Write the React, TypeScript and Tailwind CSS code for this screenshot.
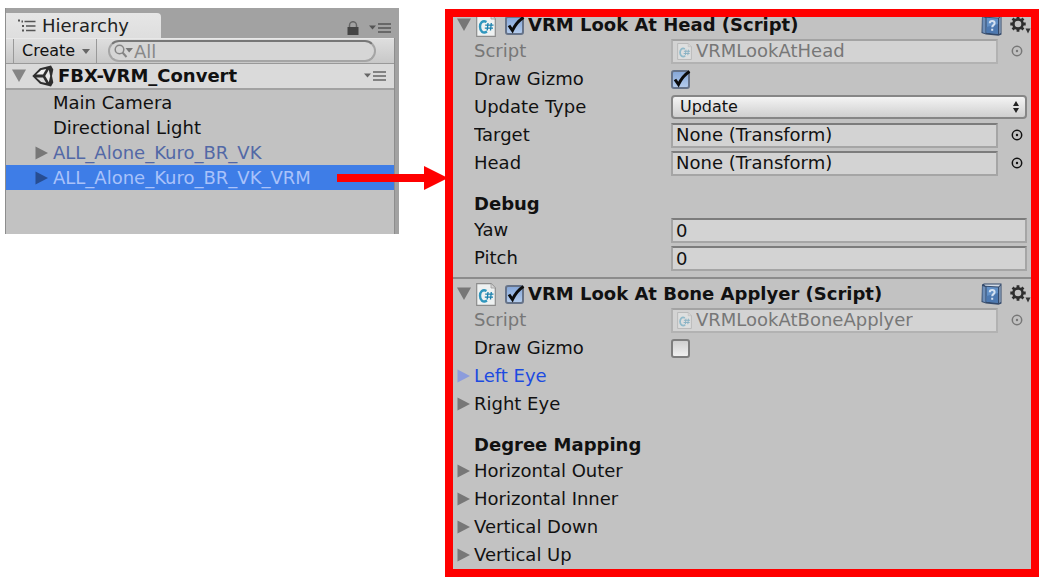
import { useState, ReactNode } from 'react';
import clsx from 'clsx';

const Triangle = ({ open, className }: { open?: boolean, className?: string }) => (
    <svg viewBox="0 0 14 14" className={clsx('w-3.5 h-3.5 shrink-0 fill-current', className)}>
        <path d={open ? 'M0 0.5H14L7 13Z' : 'M0.5 0.5L13 7L0.5 13.5Z'} />
    </svg>
)

const MenuIcon = ({ className }: { className?: string }) => (
    <svg viewBox="0 0 22 10" className={clsx('w-[22px] h-2.5 shrink-0', className)}>
        <path d="M0 2.5H7L3.5 6.5Z" fill="currentColor" />
        <path d="M9 1H22M9 5H22M9 9H22" stroke="currentColor" strokeWidth="1.6" />
    </svg>
)

const HierarchyIcon = () => (
    <svg viewBox="0 0 18 14" className="w-[18px] h-3.5 shrink-0" fill="none" stroke="#555" strokeWidth="1.6">
        <path d="M6.5 2.5H17.5M8 7H17.5M8 11.5H17.5" />
        <path d="M0 1.5H2M3.5 2.5H5M4 7H6M4 11.5H6" strokeWidth="2" />
    </svg>
)

const LockIcon = () => (
    <svg viewBox="0 0 12 14" className="w-3 h-3.5 shrink-0">
        <path d="M2.5 7V4.2a3.5 3.5 0 0 1 7 0V7" fill="none" stroke="#666" strokeWidth="1.5" />
        <rect x="0.5" y="6" width="11" height="8" fill="#444" />
    </svg>
)

const UnityIcon = () => (
    <svg viewBox="0 0 22 22" className="w-[22px] h-[22px] shrink-0">
        <path d="M0.3 11L8 3.2L19 0.4L21.3 4.5L20 11L21.3 17.5L19 21.6L8 18.8Z" fill="#2e2e2e" />
        <path d="M4.2 9.4L9.2 4.9L14.2 4L11 9.4Z" fill="#f0f0f0" />
        <path d="M4.2 12.6L9.2 17.1L14.2 18L11 12.6Z" fill="#dcdcdc" />
        <path d="M13.2 11L16.8 4.8L18.2 11L16.8 17.2Z" fill="#e8e8e8" />
    </svg>
)

const SearchIcon = () => (
    <svg viewBox="0 0 20 14" className="w-5 h-3.5 shrink-0">
        <circle cx="5.5" cy="5.5" r="4.3" fill="none" stroke="#858585" strokeWidth="1.5" />
        <path d="M8.5 8.5L12.5 13" stroke="#858585" strokeWidth="2" />
        <path d="M11.5 4H19L15.2 8.5Z" fill="#777" />
    </svg>
)

const ScriptIcon = ({ className }: { className?: string }) => (
    <svg viewBox="0 0 20 23" className={clsx('shrink-0', className)}>
        <path d="M0.7 0.7H15L19.3 5V22.3H0.7Z" fill="#eef1f1" stroke="#8c8c8c" strokeWidth="1.2" />
        <path d="M15 0.7V5H19.3" fill="#d5d5d5" stroke="#9a9a9a" strokeWidth="0.8" />
        <path d="M10.5 8C6.5 5.8 4 9.2 4 12.8C4 17.2 7 19.8 11 17.6" fill="none" stroke="#2f96bd" strokeWidth="2.4" />
        <path d="M12 9L11.2 16.5M15.3 9L14.5 16.5M9.2 11.2H17.5M8.8 14.2H17" stroke="#1b81ad" strokeWidth="1.3" />
    </svg>
)

const BookIcon = () => (
    <svg viewBox="0 0 21 22" className="w-[21px] h-[22px] shrink-0">
        <path d="M1 1.5L3 0.5H20.5V20.5L17.5 21.8L5 20.5L0.5 19Z" fill="#33496a" />
        <path d="M1.5 3L4.5 4V19.5L1.5 18.2Z" fill="#6f8fb8" />
        <path d="M3 1.5H19.5L17.5 3.5L4.5 2.8Z" fill="#d3dce6" />
        <path d="M5.5 3.8L17 4.5V19.8L5.5 18.8Z" fill="#6290c6" />
        <path d="M5.5 13L17 10V19.8L5.5 18.8Z" fill="#4c78b0" />
        <path d="M18.2 4.2L19.7 2.6V19L18.2 20Z" fill="#8ea2bc" />
        <path d="M8.8 9.2C8.8 6.4 13.6 6.4 13.6 9.2C13.6 11.2 11.2 11 11.2 13.2M11.2 14.8V16.8" fill="none" stroke="#d5e2f2" strokeWidth="2" />
    </svg>
)

const GearIcon = () => (
    <svg viewBox="0 0 21 18" className="w-[21px] h-[18px] shrink-0">
        <circle cx="8" cy="8" r="4.6" fill="none" stroke="#2e2e2e" strokeWidth="2.6" />
        <path d="M8 0.3V3M8 13V15.7M0.3 8H3M13 8H15.7M2.6 2.6L4.5 4.5M11.5 11.5L13.4 13.4M13.4 2.6L11.5 4.5M2.6 13.4L4.5 11.5" stroke="#2e2e2e" strokeWidth="2.8" />
        <path d="M15.5 12.5H20.5L18 17.5Z" fill="#333" />
    </svg>
)

const PickerIcon = () => (
    <svg viewBox="0 0 12 12" className="w-3 h-3">
        <circle cx="6" cy="6" r="4.7" fill="none" stroke="currentColor" strokeWidth="1.5" />
        <circle cx="6" cy="6" r="1.2" fill="currentColor" />
    </svg>
)

const Checkbox = ({ id, label, initial }: { id: string, label?: string, initial: boolean }) => {
    const [checked, setChecked] = useState(initial)

    return (
        <span className="relative w-[19px] h-[19px] shrink-0">
            <input
                id={id}
                type="checkbox"
                aria-label={label}
                checked={checked}
                onChange={() => setChecked(!checked)}
                className="block appearance-none w-[19px] h-[19px] rounded-[3px] border-2 border-[#7d7d7d] bg-linear-to-b from-[#cfcfcf] to-[#f0f0f0] checked:border-[#667389] checked:from-[#86a7d8] checked:to-[#b3cbec]"
            />
            {checked && (
                <svg viewBox="0 0 19 19" className="absolute inset-0 w-[19px] h-[19px] overflow-visible pointer-events-none">
                    <path d="M4 9.5L7.5 14.5C10 9 13 5 18.5 1.5" fill="none" stroke="#0c0c0c" strokeWidth="3" />
                </svg>
            )}
        </span>
    )
}

const fieldStyle = 'flex-1 min-w-0 h-[25px] border-2 border-[#a5a5a5] border-t-[#7c7c7c] bg-[#d3d3d3] px-[3px] text-left leading-5'

const Row = ({ label, htmlFor, dimmed, children }: {
    label: string,
    htmlFor?: string,
    dimmed?: boolean,
    children: ReactNode
}) => (
    <div className={clsx('flex items-center h-7 pl-[21px] pr-1', dimmed && 'text-[#777]')}>
        <label htmlFor={htmlFor} className="w-[197px] shrink-0 truncate">{label}</label>
        {children}
    </div>
)

const ObjectRow = ({ id, label, value, script }: {
    id: string,
    label: string,
    value: string,
    script?: boolean
}) => (
    <Row label={label} htmlFor={id} dimmed={script}>
        <button
            id={id}
            disabled={script}
            className={clsx(fieldStyle, 'flex items-center gap-1', script && 'border-[#b2b2b2] border-t-[#a3a3a3] bg-[#cacaca]')}
        >
            {script && <ScriptIcon className="w-[15px] h-[17px] ml-px opacity-40" />}
            <span className="truncate">{value}</span>
        </button>
        <button aria-label={`Select ${label}`} disabled={script} className="w-[29px] flex justify-end pr-1">
            <PickerIcon />
        </button>
    </Row>
)

const NumberRow = ({ id, label }: { id: string, label: string }) => {
    const [value, setValue] = useState('0')

    return (
        <Row label={label} htmlFor={id}>
            <input id={id} value={value} onChange={(e) => setValue(e.target.value)} className={fieldStyle} />
        </Row>
    )
}

const Foldout = ({ label, active }: { label: string, active?: boolean }) => (
    <button className={clsx('flex items-center gap-[3px] w-full h-7 pl-1', active && 'text-[#1c4be0]')}>
        <Triangle className={active ? 'text-[#8c9cdc]' : 'text-[#777]'} />
        {label}
    </button>
)

const Heading = ({ children }: { children: ReactNode }) => (
    <h3 className="mt-[15px] h-6 pl-[21px] font-bold leading-6">{children}</h3>
)

const ComponentHeader = ({ id, title }: { id: string, title: string }) => (
    <header className="flex items-center h-6 pl-1">
        <button aria-label="Collapse" className="mr-[5px]">
            <Triangle open className="text-[#777]" />
        </button>
        <ScriptIcon className="w-5 h-[23px] mr-[9px]" />
        <Checkbox id={id} label={`Enable ${title}`} initial={true} />
        <h2 className="flex-1 ml-1 font-bold truncate">{title}</h2>
        <button aria-label="Help" className="mr-2">
            <BookIcon />
        </button>
        <button aria-label="Settings">
            <GearIcon />
        </button>
    </header>
)

const Arrow = () => (
    <span className="absolute z-10 left-[331px] -right-[54px] inset-y-0 flex items-center pointer-events-none">
        <span className="flex-1 h-2 bg-[#ff0000]" />
        <svg viewBox="0 0 24 24" className="w-6 h-6">
            <path d="M0 0L24 12L0 24Z" fill="#ff0000" />
        </svg>
    </span>
)

const Hierarchy = () => (
    <section className="self-start bg-[#a2a2a2] pr-1">
        <div className="flex items-end h-[30px] border-l border-[#8f8f8f]">
            <button className="flex items-center gap-1.5 h-[25px] w-[155px] pl-3 rounded-tr bg-linear-to-b from-[#e6e6e6] to-[#dedede] text-[#222]">
                <HierarchyIcon />
                Hierarchy
            </button>
            <div className="flex-1 flex justify-end items-center gap-2.5 h-4 pr-1 mb-0.5 text-[#555]">
                <LockIcon />
                <MenuIcon />
            </div>
        </div>
        <div className="border-x border-[#8d8d8d] bg-[#c2c2c2] pb-11">
            <div className="flex items-center h-[26px] pl-[7px] pr-[18px] border-y border-t-[#e8e8e8] border-b-[#999] bg-linear-to-b from-[#dedede] to-[#c8c8c8]">
                <button className="flex items-center justify-between h-full w-[84px] pl-2 pr-1.5 mr-[11px] border-x border-[#999] text-base">
                    Create
                    <svg viewBox="0 0 8 5" className="w-2 h-[5px] fill-[#666]">
                        <path d="M0 0H8L4 5Z" />
                    </svg>
                </button>
                <label className="flex-1 flex items-center min-w-0 h-[22px] pl-1 rounded-full border-2 border-[#a5a5a5] border-t-[#777] bg-[#d6d6d6]">
                    <SearchIcon />
                    <input aria-label="Search" placeholder="All" className="flex-1 min-w-0 h-5 bg-transparent leading-4 placeholder:text-[#888]" />
                </label>
            </div>
            <div className="flex items-center h-[26px] pl-1.5 pr-2 border-b-2 border-[#a2a2a2] bg-[#dadada]">
                <Triangle open className="text-[#858585] mr-1.5" />
                <UnityIcon />
                <span className="flex-1 ml-1 font-bold truncate">FBX-VRM_Convert</span>
                <MenuIcon className="text-[#666]" />
            </div>
            <ul>
                <li><button className="flex items-center w-full h-[25px] pl-[47px]">Main Camera</button></li>
                <li><button className="flex items-center w-full h-[25px] pl-[47px]">Directional Light</button></li>
                <li>
                    <button className="flex items-center gap-1 w-full h-[25px] pl-[29px] text-[#5268a6]">
                        <Triangle className="text-[#777]" />
                        ALL_Alone_Kuro_BR_VK
                    </button>
                </li>
                <li className="relative">
                    <button className="flex items-center gap-1 w-full h-[25px] pl-[29px] bg-[#3e7de7] text-[#a9c2fa]">
                        <Triangle className="text-[#274d92]" />
                        ALL_Alone_Kuro_BR_VK_VRM
                    </button>
                    <Arrow />
                </li>
            </ul>
        </div>
    </section>
)

const Inspector = () => (
    <section className="self-start mt-px border-8 border-[#ff0000] bg-[#c2c2c2] overflow-hidden">
        <div className="-mt-1 pb-[5px] border-b-2 border-[#8c8c8c]">
            <ComponentHeader id="head-enabled" title="VRM Look At Head (Script)" />
            <ObjectRow id="head-script" label="Script" value="VRMLookAtHead" script />
            <Row label="Draw Gizmo" htmlFor="head-gizmo">
                <Checkbox id="head-gizmo" initial={true} />
            </Row>
            <Row label="Update Type" htmlFor="update-type">
                <div className="relative flex-1 min-w-0">
                    <select
                        id="update-type"
                        className="block appearance-none w-full h-6 pl-[7px] rounded border-2 border-[#868686] bg-linear-to-b from-[#f4f4f4] to-[#cfcfcf] text-base leading-5"
                    >
                        <option>Update</option>
                        <option>Late Update</option>
                        <option>None</option>
                    </select>
                    <svg viewBox="0 0 6 12" className="absolute right-2 top-1.5 w-1.5 h-3 fill-[#222] pointer-events-none">
                        <path d="M3 0L6 5H0ZM0 7H6L3 12Z" />
                    </svg>
                </div>
            </Row>
            <ObjectRow id="target" label="Target" value="None (Transform)" />
            <ObjectRow id="head" label="Head" value="None (Transform)" />
            <Heading>Debug</Heading>
            <NumberRow id="yaw" label="Yaw" />
            <NumberRow id="pitch" label="Pitch" />
        </div>
        <div className="pt-[3px]">
            <ComponentHeader id="bone-enabled" title="VRM Look At Bone Applyer (Script)" />
            <ObjectRow id="bone-script" label="Script" value="VRMLookAtBoneApplyer" script />
            <Row label="Draw Gizmo" htmlFor="bone-gizmo">
                <Checkbox id="bone-gizmo" initial={false} />
            </Row>
            <Foldout label="Left Eye" active />
            <Foldout label="Right Eye" />
            <Heading>Degree Mapping</Heading>
            <Foldout label="Horizontal Outer" />
            <Foldout label="Horizontal Inner" />
            <Foldout label="Vertical Down" />
            <Foldout label="Vertical Up" />
        </div>
    </section>
)

export default function App() {
    return (
        <main className="grid grid-cols-[197fr_297fr] gap-x-[46px] min-h-screen pt-2 pl-[5px] pr-1.5 bg-white font-['DejaVu_Sans',Verdana,sans-serif] text-lg text-[#111]">
            <Hierarchy />
            <Inspector />
        </main>
    )
}
